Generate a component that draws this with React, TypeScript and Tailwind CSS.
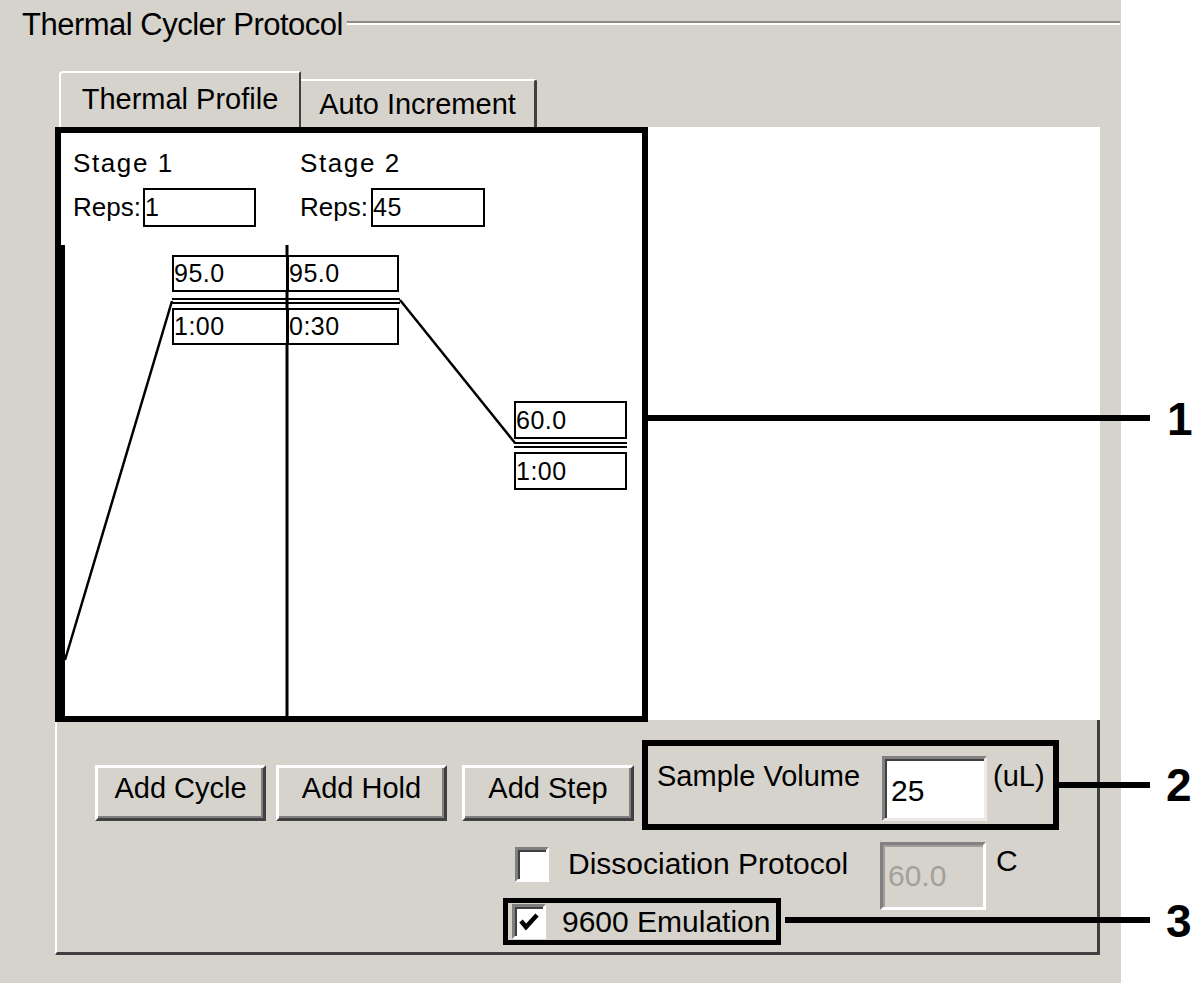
import React from "react";

const Box = ({ className, children }: { className: string; children?: React.ReactNode }) => (
	<div className={`absolute border-2 border-black bg-white flex items-center text-[25px] leading-none tracking-[0.5px] ${className}`}>
		{children}
	</div>
);

const WinButton = ({ label, className }: { label: string; className: string }) => (
	<button className={`h-[56px] pb-[10px] border-t-[3px] border-l-[3px] border-b-[3px] border-r-[3px] border-t-white border-l-white border-b-[#404040] border-r-[#404040] shadow-[inset_-2px_-2px_0_#808080] bg-[#d6d3cc] text-[29px] leading-none ${className}`}>
		{label}
	</button>
);

const CheckBox = ({ checked }: { checked?: boolean }) => (
	<div className="w-[34px] h-[35px] border-[3px] border-t-[#808080] border-l-[#808080] border-b-white border-r-white bg-white shadow-[inset_2px_2px_0_#404040] flex items-center justify-center">
		{checked && (
			<svg width="22" height="20" viewBox="0 0 22 20">
				<polyline points="3,9 8,15 19,3" fill="none" stroke="black" strokeWidth="4.5" />
			</svg>
		)}
	</div>
);

export default function App() {
	return (
		<div className="relative w-[1193px] h-[983px] bg-white overflow-hidden text-black font-['Liberation_Sans',Arial,sans-serif]">
			<div className="w-[1121px] h-full bg-[#d6d3cc] pt-[8px]">
				{/* group title */}
				<div className="flex items-center pl-[22px] pr-[1px]">
					<span className="text-[31px] leading-[34px] tracking-[-0.5px]">Thermal Cycler Protocol</span>
					<div className="flex-1 ml-[4px] mt-[-4px] border-t-2 border-t-[#8e8b84] border-b-2 border-b-white" />
				</div>

				{/* tabs */}
				<div className="ml-[59px] mt-[29px] flex items-end h-[56px]">
					<div className="h-[56px] w-[242px] border-t-2 border-l-2 border-white border-r-2 border-r-[#404040] rounded-tl-[4px] flex items-center justify-center pb-[2px] text-[29px] leading-none">
						Thermal Profile
					</div>
					<div className="h-[48px] w-[236px] border-t-2 border-white border-r-[3px] border-r-[#404040] rounded-tr-[3px] flex items-center justify-center text-[29px] leading-none">
						Auto Increment
					</div>
				</div>

				<div className="ml-[55px] w-[1045px]">
					{/* white profile panel */}
					<div className="flex h-[593px] bg-white">
						<div className="relative w-[593px] h-[595px] border-[6px] border-black text-[26px] leading-none">
							<span className="absolute left-[12px] top-[17px] tracking-[1.6px]">Stage 1</span>
							<span className="absolute left-[239px] top-[17px] tracking-[1.6px]">Stage 2</span>
							<span className="absolute left-[12px] top-[61px]">Reps:</span>
							<span className="absolute left-[239px] top-[61px]">Reps:</span>
							<Box className="left-[82px] top-[55px] w-[113px] h-[39px]">1</Box>
							<Box className="left-[310px] top-[55px] w-[114px] h-[39px]">45</Box>

							<svg className="absolute inset-0" width="581" height="583" viewBox="0 0 581 583">
								<line x1="2" y1="112" x2="2" y2="583" stroke="black" strokeWidth="4" />
								<line x1="226" y1="112" x2="226" y2="583" stroke="black" strokeWidth="3" />
								<line x1="4" y1="527" x2="111" y2="168" stroke="black" strokeWidth="2.5" />
								<line x1="111" y1="166" x2="339" y2="166" stroke="black" strokeWidth="2" />
								<line x1="111" y1="170" x2="339" y2="170" stroke="black" strokeWidth="2" />
								<line x1="339" y1="167" x2="454" y2="310" stroke="black" strokeWidth="2.5" />
								<line x1="453" y1="310" x2="566" y2="310" stroke="black" strokeWidth="2" />
								<line x1="453" y1="314" x2="566" y2="314" stroke="black" strokeWidth="2" />
							</svg>

							<Box className="left-[111px] top-[122px] w-[116px] h-[37px]">95.0</Box>
							<Box className="left-[226px] top-[122px] w-[112px] h-[37px]">95.0</Box>
							<Box className="left-[111px] top-[175px] w-[116px] h-[37px]">1:00</Box>
							<Box className="left-[226px] top-[175px] w-[112px] h-[37px]">0:30</Box>
							<Box className="left-[453px] top-[268px] w-[113px] h-[38px]">60.0</Box>
							<Box className="left-[453px] top-[319px] w-[113px] h-[38px]">1:00</Box>
						</div>
						<div className="flex-1" />
					</div>

					{/* lower control panel */}
					<div className="h-[235px] border-l-2 border-l-white border-r-[3px] border-r-[#404040] border-b-[3px] border-b-[#404040]">
						<div className="flex items-start pl-[38px]">
							<div className="flex mt-[45px]">
								<WinButton label="Add Cycle" className="w-[171px]" />
								<WinButton label="Add Hold" className="w-[171px] ml-[10px]" />
								<WinButton label="Add Step" className="w-[172px] ml-[15px]" />
							</div>
							<div className="ml-[8px] mt-[20px] w-[417px] h-[90px] border-[6px] border-black flex items-start pl-[9px] pt-[10px]">
								<span className="text-[29px] leading-none mt-[6px] w-[225px]">Sample Volume</span>
								<div className="w-[105px] h-[65px] bg-white border-[3px] border-t-[#808080] border-l-[#808080] border-b-[#ecebe7] border-r-[#ecebe7] shadow-[inset_2px_2px_0_#404040] flex items-center pl-[6px] pt-[4px] text-[30px] leading-none">
									25
								</div>
								<span className="ml-[6px] mt-[6px] text-[29px] leading-none">(uL)</span>
							</div>
						</div>

						<div className="flex pl-[446px] mt-[12px]">
							<div className="w-[377px] flex flex-col">
								<div className="flex items-center h-[44px] pl-[12px] gap-[19px]">
									<CheckBox />
									<span className="text-[30px] leading-none">Dissociation Protocol</span>
								</div>
								<div className="mt-[12px] self-start h-[47px] border-[5px] border-black flex items-center pl-[4px] pr-[6px] gap-[16px]">
									<CheckBox checked />
									<span className="text-[30px] leading-none">9600 Emulation</span>
								</div>
							</div>
							<div className="w-[106px] h-[68px] bg-[#d6d3cc] border-[3px] border-t-[#808080] border-l-[#808080] border-b-white border-r-white shadow-[inset_2px_2px_0_#a09d96] flex items-center pl-[5px] text-[30px] leading-none text-[#a3a09a]">
								60.0
							</div>
							<span className="ml-[10px] mt-[4px] text-[30px] leading-none">C</span>
						</div>
					</div>
				</div>
			</div>

			{/* callouts */}
			<div className="absolute left-[648px] top-[415px] w-[502px] h-[6px] bg-black" />
			<span className="absolute left-[1167px] top-[396px] text-[46px] leading-none font-bold">1</span>
			<div className="absolute left-[1057px] top-[782px] w-[93px] h-[6px] bg-black" />
			<span className="absolute left-[1166px] top-[762px] text-[46px] leading-none font-bold">2</span>
			<div className="absolute left-[785px] top-[917px] w-[365px] h-[6px] bg-black" />
			<span className="absolute left-[1166px] top-[898px] text-[46px] leading-none font-bold">3</span>
		</div>
	);
}
